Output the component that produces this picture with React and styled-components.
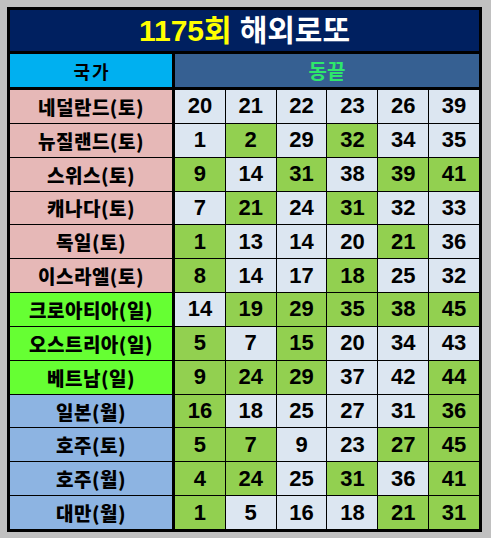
import React from "react";
import styled, { createGlobalStyle } from "styled-components";

const GlobalStyle = createGlobalStyle`
  html, body { margin: 0; padding: 0; background: #c0c0c0; }
  body { padding: 7px; font-family: "Liberation Sans", "Noto Sans CJK KR", sans-serif; }
`;

const Frame = styled.div`
  width: 475px;
  height: 525px;
  box-sizing: border-box;
  border: 3px solid #000;
  background: #000;
  display: flex;
  flex-direction: column;
  gap: 3px;
`;

const Title = styled.div`
  height: 41px;
  background: #002060;
  display: flex;
  align-items: center;
  justify-content: center;
  gap: 8px;
  font-family: "Liberation Sans", "Noto Sans CJK KR", sans-serif;
  font-weight: 700;
  font-size: 30px;
  line-height: 1;
`;

const TitlePart = styled.span`
  color: ${(p) => p.$color};
`;

const Grid = styled.div`
  flex: 1;
  display: grid;
  grid-template-columns: 164px repeat(6, 1fr);
  grid-template-rows: 35px repeat(13, 1fr);
  gap: 1px;
`;

const HeadCell = styled.div`
  box-sizing: border-box;
  border-bottom: 2px solid #000;
  display: flex;
  align-items: center;
  justify-content: center;
  font-family: "Noto Sans CJK KR", sans-serif;
  font-weight: 700;
  background: ${(p) => p.$bg};
  color: ${(p) => p.$color};
  font-size: ${(p) => p.$size}px;
  letter-spacing: ${(p) => p.$spacing || 0}px;
  padding-left: ${(p) => p.$spacing || 0}px;
  grid-column: ${(p) => p.$span || "auto"};
  ${(p) => (p.$left ? "border-right: 2px solid #000;" : "")}
`;

const CountryCell = styled.div`
  box-sizing: border-box;
  border-right: 2px solid #000;
  background: ${(p) => p.$bg};
  display: flex;
  align-items: center;
  justify-content: center;
  font-family: "Noto Sans CJK KR", sans-serif;
  font-weight: 800;
  font-size: 19px;
  color: #000;
  letter-spacing: 0.5px;
`;

const NumCell = styled.div`
  background: ${(p) => (p.$hit ? "#92d050" : "#dce6f1")};
  display: flex;
  align-items: center;
  justify-content: center;
  font-family: "Liberation Sans", sans-serif;
  font-weight: 700;
  font-size: 22px;
  color: #000;
`;

const PINK = "#e6b8b7";
const LIME = "#66ff33";
const BLUE = "#8db4e2";

const rows = [
  { name: "네덜란드(토)", bg: PINK, nums: [20, 21, 22, 23, 26, 39], hits: [] },
  { name: "뉴질랜드(토)", bg: PINK, nums: [1, 2, 29, 32, 34, 35], hits: [1, 3] },
  { name: "스위스(토)", bg: PINK, nums: [9, 14, 31, 38, 39, 41], hits: [0, 2, 4, 5] },
  { name: "캐나다(토)", bg: PINK, nums: [7, 21, 24, 31, 32, 33], hits: [1, 3] },
  { name: "독일(토)", bg: PINK, nums: [1, 13, 14, 20, 21, 36], hits: [0, 4] },
  { name: "이스라엘(토)", bg: PINK, nums: [8, 14, 17, 18, 25, 32], hits: [0, 3] },
  { name: "크로아티아(일)", bg: LIME, nums: [14, 19, 29, 35, 38, 45], hits: [1, 2, 3, 4, 5] },
  { name: "오스트리아(일)", bg: LIME, nums: [5, 7, 15, 20, 34, 43], hits: [0, 2] },
  { name: "베트남(일)", bg: LIME, nums: [9, 24, 29, 37, 42, 44], hits: [0, 1, 2, 5] },
  { name: "일본(월)", bg: BLUE, nums: [16, 18, 25, 27, 31, 36], hits: [0, 5] },
  { name: "호주(토)", bg: BLUE, nums: [5, 7, 9, 23, 27, 45], hits: [0, 1, 4, 5] },
  { name: "호주(월)", bg: BLUE, nums: [4, 24, 25, 31, 36, 41], hits: [0, 1, 3, 5] },
  { name: "대만(월)", bg: BLUE, nums: [1, 5, 16, 18, 21, 31], hits: [0, 4, 5] },
];

export default function App() {
  return (
    <>
      <GlobalStyle />
      <Frame>
        <Title>
          <TitlePart $color="#ffff00">1175회</TitlePart>
          <TitlePart $color="#ffffff">해외로또</TitlePart>
        </Title>
        <Grid>
          <HeadCell $bg="#00b0f0" $color="#000" $size={18} $spacing={2} $left>
            국가
          </HeadCell>
          <HeadCell $bg="#366092" $color="#2ee86b" $size={20} $span="2 / span 6">
            동끝
          </HeadCell>
          {rows.map((r) => (
            <React.Fragment key={r.name}>
              <CountryCell $bg={r.bg}>{r.name}</CountryCell>
              {r.nums.map((n, i) => (
                <NumCell key={i} $hit={r.hits.includes(i)}>
                  {n}
                </NumCell>
              ))}
            </React.Fragment>
          ))}
        </Grid>
      </Frame>
    </>
  );
}
